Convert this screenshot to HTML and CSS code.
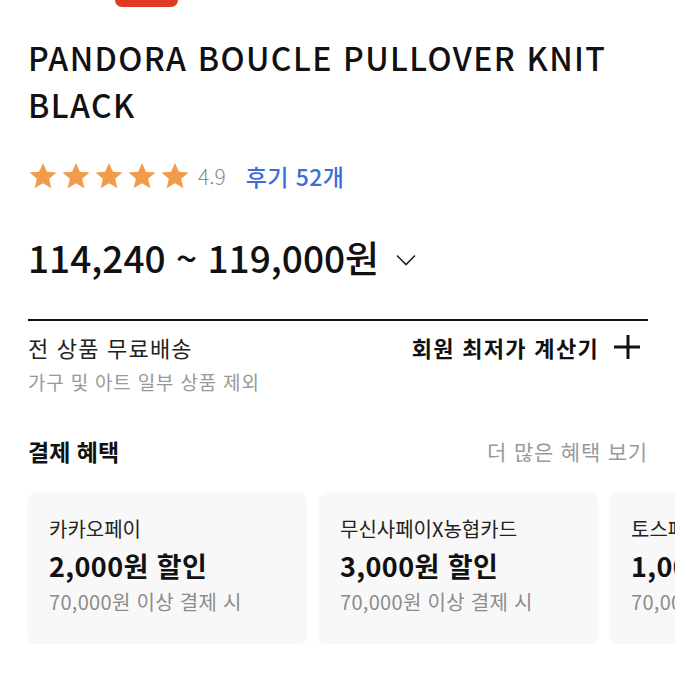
FILE: index.html
```html
<!DOCTYPE html>
<html lang="ko">
<head>
  <meta charset="UTF-8">
  <meta name="viewport" content="width=device-width, initial-scale=1.0">
  <title>PANDORA BOUCLE PULLOVER KNIT BLACK</title>
  <link rel="stylesheet" href="styles.css">
</head>
<body>
  <div class="brand-tab"></div>

  <h1 class="title">PANDORA BOUCLE PULLOVER KNIT BLACK</h1>

  <div class="rating">
    <div class="stars">
      <svg viewBox="0 0 24 24"><path d="M12 1.5l3.1 7.1 7.7.6-5.9 5 1.8 7.5L12 17.7l-6.7 4 1.8-7.5-5.9-5 7.7-.6z"/></svg>
      <svg viewBox="0 0 24 24"><path d="M12 1.5l3.1 7.1 7.7.6-5.9 5 1.8 7.5L12 17.7l-6.7 4 1.8-7.5-5.9-5 7.7-.6z"/></svg>
      <svg viewBox="0 0 24 24"><path d="M12 1.5l3.1 7.1 7.7.6-5.9 5 1.8 7.5L12 17.7l-6.7 4 1.8-7.5-5.9-5 7.7-.6z"/></svg>
      <svg viewBox="0 0 24 24"><path d="M12 1.5l3.1 7.1 7.7.6-5.9 5 1.8 7.5L12 17.7l-6.7 4 1.8-7.5-5.9-5 7.7-.6z"/></svg>
      <svg viewBox="0 0 24 24"><path d="M12 1.5l3.1 7.1 7.7.6-5.9 5 1.8 7.5L12 17.7l-6.7 4 1.8-7.5-5.9-5 7.7-.6z"/></svg>
    </div>
    <span class="score">4.9</span>
    <a class="reviews" href="#">후기 52개</a>
  </div>

  <div class="price">
    <span>114,240 ~ 119,000원</span>
    <svg class="chevron" viewBox="0 0 20 12"><path d="M1 1.5l9 9 9-9"/></svg>
  </div>

  <div class="shipping">
    <div>
      <div class="ship-title">전 상품 무료배송</div>
      <div class="ship-note">가구 및 아트 일부 상품 제외</div>
    </div>
    <div class="calc">
      <span>회원 최저가 계산기</span>
      <svg class="plus" viewBox="0 0 26 26"><path d="M0 13h26M14 1v24"/></svg>
    </div>
  </div>

  <div class="benefit-head">
    <h2>결제 혜택</h2>
    <a href="#">더 많은 혜택 보기</a>
  </div>

  <div class="cards">
    <div class="card">
      <div class="card-name">카카오페이</div>
      <div class="card-amount">2,000원 할인</div>
      <div class="card-cond">70,000원 이상 결제 시</div>
    </div>
    <div class="card">
      <div class="card-name">무신사페이X농협카드</div>
      <div class="card-amount">3,000원 할인</div>
      <div class="card-cond">70,000원 이상 결제 시</div>
    </div>
    <div class="card">
      <div class="card-name">토스페이</div>
      <div class="card-amount">1,000원 할인</div>
      <div class="card-cond">70,000원 이상 결제 시</div>
    </div>
  </div>
</body>
</html>
```

FILE: styles.css
```css
body {
  font-family: "Noto Sans CJK KR", "Noto Sans", sans-serif;
  margin: 0;
  padding: 0 27px 0 28px;
  background-color: #ffffff;
  color: #111111;
  overflow: hidden;
}

.brand-tab {
  width: 63px;
  height: 7px;
  margin-left: 87px;
  background-color: #e23a22;
  border-radius: 0 0 10px 10px;
}

.title {
  margin: 27px 0 0;
  font-size: 32px;
  font-weight: 500;
  line-height: 47px;
  letter-spacing: 1.4px;
  color: #111111;
}

.rating {
  display: flex;
  align-items: center;
  margin-top: 33px;
  height: 30px;
}

.stars {
  display: flex;
  gap: 3px;
}

.stars svg {
  width: 30px;
  height: 30px;
  fill: #f29c4b;
}

.score {
  margin-left: 8px;
  font-size: 21px;
  font-weight: 300;
  color: #8a8a8a;
}

.reviews {
  margin-left: 20px;
  font-size: 23px;
  font-weight: 500;
  letter-spacing: 0.4px;
  color: #3b6fd6;
  text-decoration: none;
}

.price {
  display: flex;
  align-items: center;
  margin-top: 41px;
  font-size: 37px;
  font-weight: 500;
  line-height: 50px;
}

.chevron {
  width: 20px;
  height: 12px;
  margin: 6px 0 0 17px;
  fill: none;
  stroke: #222222;
  stroke-width: 1.6;
}

.shipping {
  display: flex;
  justify-content: space-between;
  align-items: flex-start;
  margin-top: 37px;
  padding-top: 11px;
  border-top: 2px solid #111111;
}

.ship-title {
  font-size: 22px;
  line-height: 30px;
  letter-spacing: 1.2px;
  color: #222222;
}

.ship-note {
  margin-top: 7px;
  font-size: 19px;
  line-height: 26px;
  letter-spacing: 0.8px;
  color: #999999;
}

.calc {
  display: flex;
  align-items: center;
  font-size: 22px;
  font-weight: 700;
  line-height: 30px;
  letter-spacing: 1.3px;
  margin-right: 8px;
}

.plus {
  width: 26px;
  height: 26px;
  margin-left: 15px;
  fill: none;
  stroke: #111111;
  stroke-width: 3;
}

.benefit-head {
  display: flex;
  justify-content: space-between;
  align-items: center;
  margin-top: 40px;
}

.benefit-head h2 {
  margin: 0;
  font-size: 23px;
  font-weight: 700;
  line-height: 32px;
}

.benefit-head a {
  font-size: 21px;
  letter-spacing: 0.8px;
  color: #9a9a9a;
  text-decoration: none;
}

.cards {
  display: flex;
  gap: 13px;
  margin-top: 26px;
  width: 1000px;
}

.card {
  flex: 0 0 278px;
  box-sizing: border-box;
  height: 151px;
  padding: 22px 21px;
  background-color: #f8f8f8;
  border-radius: 8px;
  box-shadow: 0 1px 5px rgba(0, 0, 0, 0.04);
}

.card-name {
  font-size: 20px;
  line-height: 28px;
  color: #222222;
}

.card-amount {
  margin-top: 6px;
  font-size: 27px;
  font-weight: 700;
  line-height: 34px;
  letter-spacing: 0.4px;
  color: #111111;
}

.card-cond {
  margin-top: 5px;
  font-size: 20px;
  line-height: 28px;
  letter-spacing: 0.3px;
  color: #8c8c8c;
}
```
